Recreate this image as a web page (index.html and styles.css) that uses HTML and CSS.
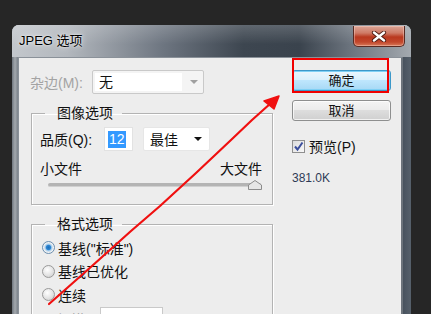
FILE: index.html
```html
<!DOCTYPE html>
<html lang="zh">
<head>
    <meta charset="UTF-8">
    <title>JPEG 选项</title>
    <link rel="stylesheet" href="styles.css">
</head>
<body>
<div class="window">
    <div class="titlebar">
        <span class="title">JPEG 选项</span>
        <span class="close">
            <svg width="16" height="11" viewBox="0 0 16 11">
                <path d="M3 1.5 L13 9.5 M13 1.5 L3 9.5" stroke="#4a1a12" stroke-width="4.2" stroke-linecap="round"/>
                <path d="M3 1.5 L13 9.5 M13 1.5 L3 9.5" stroke="#ffffff" stroke-width="2.4" stroke-linecap="round"/>
            </svg>
        </span>
    </div>
    <div class="client">
        <div class="main">
            <div class="row matte">
                <label class="disabled matte-label">杂边(M):</label>
                <span class="combo combo-off">
                    <span class="combo-value">无</span>
                    <span class="caret caret-gray"></span>
                </span>
            </div>

            <fieldset class="group">
                <legend>图像选项</legend>
                <div class="row quality">
                    <label class="quality-label">品质(Q):</label>
                    <span class="num"><span class="selected">12</span></span>
                    <span class="combo combo-quality">
                        <span class="combo-value">最佳</span>
                        <span class="caret"></span>
                    </span>
                </div>
                <div class="row ends">
                    <span>小文件</span>
                    <span>大文件</span>
                </div>
                <div class="slider">
                    <span class="track"></span>
                    <span class="thumb">
                        <svg width="14" height="10" viewBox="0 0 14 10">
                            <path d="M0.5 9.5 L0.5 5 L7 0.5 L13.5 5 L13.5 9.5 Z" fill="#e6e6e6" stroke="#8c8c8c"/>
                        </svg>
                    </span>
                </div>
            </fieldset>

            <fieldset class="group group-format">
                <legend>格式选项</legend>
                <label class="radio"><span class="dot dot-on"></span>基线("标准")</label>
                <label class="radio"><span class="dot"></span>基线已优化</label>
                <label class="radio"><span class="dot"></span>连续</label>
                <div class="row scans">
                    <span class="disabled">扫描:</span>
                    <span class="scan-box"></span>
                </div>
            </fieldset>
        </div>

        <div class="side">
            <button class="btn btn-default">确定</button>
            <button class="btn">取消</button>
            <label class="check">
                <span class="check-box">
                    <svg width="11" height="11" viewBox="0 0 11 11">
                        <path d="M2 5.5 L4.5 8.5 L9.5 1.5" fill="none" stroke="#3c4f9c" stroke-width="2"/>
                    </svg>
                </span>
                预览(P)
            </label>
            <div class="size">381.0K</div>
        </div>
    </div>
</div>

<div class="mark-box"></div>
<svg class="mark-arrow" width="431" height="314" viewBox="0 0 431 314">
    <path d="M49 304 L92 266 L131 231 L160 206 L196 173 L231 140 L252 120 L271 103"
          fill="none" stroke="#f01010" stroke-width="2.2" stroke-linecap="round" stroke-linejoin="round"/>
    <path d="M279 96 L264 101 L274 109 Z" fill="#f01010" stroke="#f01010" stroke-width="1.5" stroke-linejoin="round"/>
</svg>
</body>
</html>
```

FILE: styles.css
```css
* {
    box-sizing: border-box;
}

body {
    margin: 0;
    height: 314px;
    overflow: hidden;
    background: #262626;
    font-family: "Liberation Sans", "Noto Sans CJK SC", sans-serif;
    font-size: 14px;
    color: #111;
}

.window {
    margin: 25px 0 0 12px;
    width: 399px;
    height: 300px;
    border-radius: 7px 7px 0 0;
    overflow: hidden;
    background: linear-gradient(90deg, #6f767e 0, #a3a8ad 3px, #7b828a 6px, #2f3a46 6px, #3a4450 96%, #56606b 100%);
    box-shadow: inset 0 1px 0 #d8dce0;
}

.titlebar {
    height: 32px;
    display: flex;
    justify-content: space-between;
    align-items: flex-start;
    padding: 0 6px 0 7px;
    background:
        linear-gradient(180deg, rgba(255, 255, 255, 0.18), rgba(255, 255, 255, 0) 60%),
        linear-gradient(90deg, #c3c7cc 0, #b2b7bd 14%, #6d7580 38%, #3d4650 58%, #3a434d 72%, #707882 86%, #a3a9af 100%);
}

.title {
    margin-top: 8px;
    font-size: 13px;
    line-height: 16px;
    color: #000;
    text-shadow: 0 0 6px rgba(255, 255, 255, 0.9), 0 0 2px rgba(255, 255, 255, 0.9);
}

.close {
    flex-shrink: 0;
    margin-top: 1px;
    width: 52px;
    height: 21px;
    display: flex;
    align-items: center;
    justify-content: center;
    border: 1px solid #5a2a22;
    border-top: 0;
    border-radius: 0 0 5px 5px;
    background: linear-gradient(180deg, #dba596 0, #cf7a66 35%, #b9381f 55%, #c2472c 80%, #d87a5a 100%);
    box-shadow: inset 0 0 0 1px rgba(255, 220, 210, 0.4);
}

.client {
    display: flex;
    height: 268px;
    margin: 0 8px 0 6px;
    padding-top: 12px;
    background: #ededed;
    border: 1px solid #8a9199;
    border-right: 2px solid #6c737b;
}

.main {
    width: 254px;
    flex-shrink: 0;
    padding-left: 11px;
}

.row {
    display: flex;
    align-items: center;
}

.matte {
    height: 24px;
}

.matte-label {
    width: 62px;
}

.disabled {
    color: #a3a3a3;
}

.combo {
    display: flex;
    align-items: center;
    height: 24px;
    border: 1px solid #c9c9c9;
    border-radius: 2px;
    background: #f4f4f4;
}

.combo-off {
    width: 112px;
    padding: 2px;
}

.combo-off .combo-value {
    width: 87px;
    height: 18px;
    background: #fff;
    padding-left: 4px;
    line-height: 18px;
}

.combo-off .caret {
    margin-left: 8px;
}

.caret {
    width: 0;
    height: 0;
    border-left: 4px solid transparent;
    border-right: 4px solid transparent;
    border-top: 4px solid #111;
}

.caret-gray {
    border-top-color: #a0a0a0;
}

.group {
    margin: 9px 0 0 1px;
    padding: 4px 8px 14px 8px;
    border: 1px solid #b3b3b3;
    box-shadow: inset 1px 1px 0 #fff, 1px 1px 0 #fff;
}

.group legend {
    margin-left: 5px;
    padding: 0 9px 0 12px;
    line-height: 20px;
}

.quality {
    height: 24px;
}

.quality-label {
    width: 64px;
}

.num {
    width: 29px;
    height: 24px;
    padding: 3px 0 0 3px;
    background: #fff;
    border: 1px solid #e2e2e2;
}

.selected {
    display: inline-block;
    padding: 0 1px;
    line-height: 17px;
    background: #3399ff;
    color: #fff;
}

.combo-quality {
    width: 67px;
    margin-left: 10px;
    padding: 0 7px 0 6px;
    justify-content: space-between;
    background: #fff;
    border-color: #e6e6e6;
}

.ends {
    margin-top: 10px;
    line-height: 16px;
    justify-content: space-between;
    padding-right: 2px;
}

.slider {
    display: flex;
    align-items: center;
    height: 10px;
    margin: 3px 2px 0 8px;
}

.track {
    flex: 1;
    height: 4px;
    border-radius: 2px;
    background: #b4b4b4;
    border-bottom: 1px solid #d0d0d0;
}

.thumb {
    display: flex;
    margin-left: -13px;
}

.group-format {
    padding-top: 2px;
    height: 120px;
}

.radio {
    display: flex;
    align-items: center;
    height: 23.5px;
    gap: 3px;
    margin-left: 2px;
}

.dot {
    width: 13px;
    height: 13px;
    border-radius: 50%;
    border: 1px solid #9a9a9a;
    background: radial-gradient(circle at 40% 35%, #ffffff 0, #e3e3e3 55%, #c8c8c8 100%);
}

.dot-on {
    background: radial-gradient(circle at 50% 50%, #1f6fb8 0, #2a84d2 28%, #9cc7ea 40%, #f4f4f4 62%, #d4d4d4 100%);
    border-color: #6b8fb0;
}

.scans {
    margin-top: 0;
    padding-left: 17px;
    gap: 11px;
}

.scan-box {
    width: 63px;
    height: 24px;
    background: #fff;
    border: 1px solid #c9c9c9;
}

.side {
    display: flex;
    flex-direction: column;
    margin-left: 19px;
    width: 99px;
}

.btn {
    height: 21px;
    padding: 0;
    font-family: "Liberation Sans", "Noto Sans CJK SC", sans-serif;
    font-size: 13px;
    line-height: 18px;
    color: #111;
    border: 1px solid #8e8f8f;
    border-radius: 3px;
    background: linear-gradient(180deg, #f4f4f4 0, #ececec 45%, #dddddd 50%, #d0d0d0 100%);
    box-shadow: inset 0 0 0 1px rgba(255, 255, 255, 0.7);
}

.btn-default {
    border-color: #3c98c9;
    background: linear-gradient(180deg, #eaf6fd 0, #d9f0fc 45%, #bee6fd 50%, #a7d9f5 100%);
    box-shadow: inset 0 0 0 1px #7fd0f5;
}

.btn + .btn {
    margin-top: 9px;
}

.check {
    display: flex;
    align-items: center;
    gap: 4px;
    height: 16px;
    margin-top: 17px;
}

.check-box {
    display: flex;
    align-items: center;
    justify-content: center;
    width: 13px;
    height: 13px;
    border: 1px solid #8f8f8f;
    background: linear-gradient(135deg, #dcdcdc, #f8f8f8);
}

.size {
    margin-top: 17px;
    font-size: 12px;
    line-height: 14px;
    color: #2e3b55;
}

.mark-box {
    position: absolute;
    left: 292px;
    top: 58px;
    width: 97px;
    height: 35px;
    border: 2px solid #f00000;
}

.mark-arrow {
    position: absolute;
    left: 0;
    top: 0;
}
```
